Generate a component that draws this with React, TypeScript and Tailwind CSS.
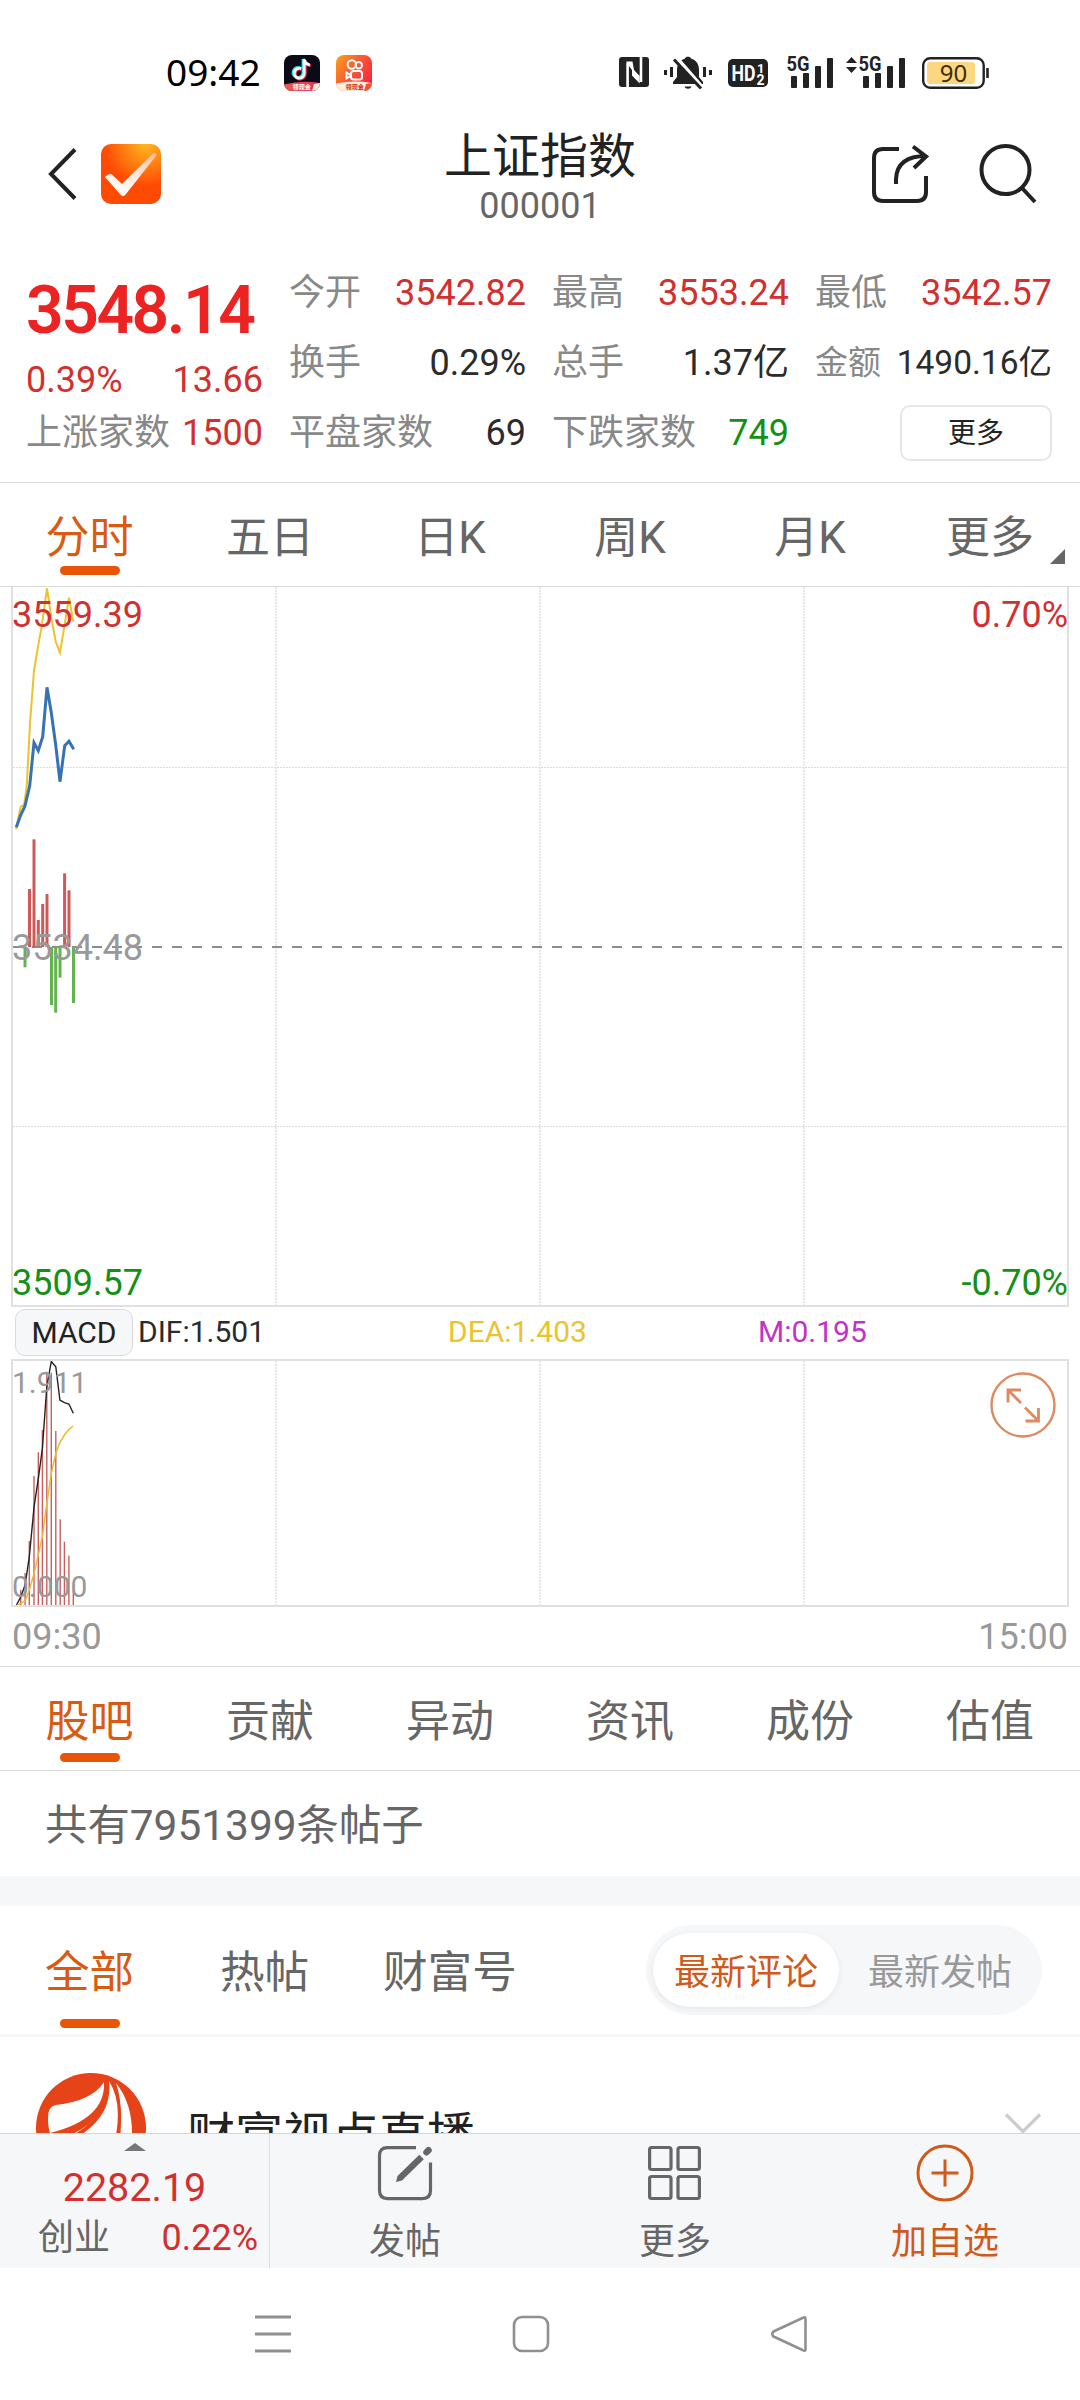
import React from "react";

const RED = "text-[#d2302f]";
const INK = "text-[#2b2b2b]";
const GREEN = "text-[#149014]";

function StatusBar() {
  return (
    <div className="flex h-[100px] items-center pt-[46px] pl-[166px] text-[#222]">
      <span className="-mt-[2px] w-[118px] font-['Noto_Sans'] text-[37px] leading-[54px] text-black">09:42</span>
      <svg width="36" height="36" viewBox="0 0 36 36">
        <defs>
          <clipPath id="appA"><rect width="36" height="36" rx="8" /></clipPath>
          <linearGradient id="ribbon" x1="0" x2="1"><stop offset="0" stopColor="#f05a50" /><stop offset="1" stopColor="#e8285a" /></linearGradient>
        </defs>
        <g clipPath="url(#appA)">
          <rect width="36" height="36" fill="#0b0b18" />
          <g fill="none" strokeWidth="3.2">
            <path d="M17.2 13.6a5 5 0 1 0 3 4.8V4.5c.6 3 2.6 5 5.6 5.4" stroke="#25e6e4" transform="translate(-1 -.6)" />
            <path d="M17.2 13.6a5 5 0 1 0 3 4.8V4.5c.6 3 2.6 5 5.6 5.4" stroke="#f8335a" transform="translate(.9 .7)" />
            <path d="M17.2 13.6a5 5 0 1 0 3 4.8V4.5c.6 3 2.6 5 5.6 5.4" stroke="#fff" strokeWidth="2.8" />
          </g>
          <path d="M0 29.5Q18 25 36 28v8H0z" fill="url(#ribbon)" />
          <path d="M28 36l2-7 6-1v6q-3 2-5 2z" fill="#fde6d8" />
          <text x="8.5" y="34.2" fontSize="6.2" fontWeight="700" fill="#fff" fontFamily="Noto Sans CJK SC">领现金</text>
        </g>
      </svg>
      <svg className="ml-4" width="36" height="36" viewBox="0 0 36 36">
        <defs>
          <clipPath id="appB"><rect width="36" height="36" rx="8" /></clipPath>
          <linearGradient id="kwai" x1="0" y1="0" x2="1" y2=".7"><stop offset="0" stopColor="#fca21c" /><stop offset=".5" stopColor="#fb5a32" /><stop offset="1" stopColor="#f9243f" /></linearGradient>
        </defs>
        <g clipPath="url(#appB)">
          <rect width="36" height="36" fill="url(#kwai)" />
          <g fill="none" stroke="#fff" strokeWidth="2">
            <circle cx="15.8" cy="9.5" r="4.2" /><circle cx="22.8" cy="10.3" r="3.2" />
            <rect x="15" y="16" width="11" height="8.5" rx="2.5" /><path d="M14.5 20l-4-2.500v6l4-2.500" />
          </g>
          <path d="M0 28.5Q18 25 36 28v8H0z" fill="#ffeedd" />
          <path d="M28 36l2-7 6-1v6q-3 2-5 2z" fill="#f4502f" />
          <text x="9.5" y="34.2" fontSize="6.2" fontWeight="700" fill="#d22a1c" fontFamily="Noto Sans CJK SC">领现金</text>
        </g>
      </svg>
      <svg className="-mt-[2px] ml-[247px]" width="30" height="30" viewBox="0 0 30 30">
        <rect width="30" height="30" rx="3" fill="#222" />
        <path d="M8.600 30V5.500M22 0V25" fill="none" stroke="#fff" strokeWidth="2.600" />
        <path d="M7.300 4.500H13.500L15 13L20.700 19V26.500L13 18.500V13L9.900 9z" fill="#fff" />
      </svg>
      <svg className="-mt-[2px] ml-[15px]" width="48" height="34" viewBox="0 0 48 34" fill="#222">
        <path d="M9 29v-2l4-5v-7C13 9 16.500 5 21 3.500 21.500 1 26.500 1 27 3.500 32 5 35 9 35 15v7l4 5v2zM20.500 31.500h7c-1 3-6 3-7 0z" />
        <path d="M12 2.500l26 30" stroke="#fff" strokeWidth="4.500" /><path d="M10 4.500l27 29" stroke="#222" strokeWidth="3" />
        <rect x="0" y="15" width="3" height="5" /><rect x="6" y="12" width="3" height="10" /><rect x="39" y="12" width="3" height="10" /><rect x="45" y="15" width="3" height="5" />
      </svg>
      <svg className="ml-4" width="40" height="28" viewBox="0 0 40 28">
        <rect width="40" height="28" rx="5" fill="#222" />
        <text x="3.5" y="22" fontSize="22" fontWeight="700" fill="#fff" fontFamily="Roboto" textLength="24" lengthAdjust="spacingAndGlyphs">HD</text>
        <text x="29" y="13.5" fontSize="13" fontWeight="700" fill="#fff" fontFamily="Roboto">1</text>
        <text x="28.5" y="25.5" fontSize="14" fontWeight="700" fill="#fff" fontFamily="Roboto">2</text>
      </svg>
      <Signal className="-mt-[3px] ml-[17px]" />
      <svg className="-mt-[16px] ml-[11px]" width="11" height="16" viewBox="0 0 11 16" fill="#222"><path d="M5.5 0L11 6H0zM0 10h11l-5.500 6z" /></svg>
      <Signal className="-mt-[3px]" />
      <svg className="-mt-px ml-[15px]" width="67" height="32" viewBox="0 0 67 32">
        <rect x="1.2" y="1.2" width="60.5" height="29.6" rx="7" fill="#fff" stroke="#222" strokeWidth="2.4" />
        <rect x="5" y="5" width="48" height="22" rx="3.5" fill="#fdd681" />
        <path d="M65.500 11v10" stroke="#222" strokeWidth="2.6" />
        <text x="31.5" y="24.5" fontSize="24" fill="#3a2c06" fontFamily="Noto Sans" textAnchor="middle">90</text>
      </svg>
    </div>
  );
}

function Signal({ className }: { className: string }) {
  return (
    <svg className={className} width="50" height="46" viewBox="-2 -6 50 46" fill="#222">
      <text x="-.5" y="16" fontSize="21" fontWeight="700" fontFamily="Roboto" textLength="23" lengthAdjust="spacingAndGlyphs">5G</text>
      <rect x="4" y="21" width="6" height="12" rx="1" /><rect x="16" y="18" width="6" height="15" rx="1" />
      <rect x="28" y="11" width="6" height="22" rx="1" /><rect x="40" y="3" width="6" height="30" rx="1" />
    </svg>
  );
}

function Header() {
  return (
    <div className="flex h-[148px] items-center justify-between pl-[48px] pr-[42px]">
      <div className="flex w-[200px] items-center">
        <svg width="30" height="52" viewBox="0 0 30 52" fill="none" stroke="#222" strokeWidth="4"><path d="M27 1.500L3 26l24 24.500" /></svg>
        <svg className="ml-[23px]" width="60" height="60" viewBox="0 0 60 60">
          <defs>
            <radialGradient id="logo" cx=".75" cy="0" r=".7"><stop offset="0" stopColor="#ffb920" /><stop offset="1" stopColor="#ff4a04" /></radialGradient>
            <linearGradient id="tick" x1="1" y1="0" x2=".3" y2="1"><stop offset="0" stopColor="#ffb890" /><stop offset=".5" stopColor="#ffe6da" /><stop offset="1" stopColor="#fff" /></linearGradient>
          </defs>
          <rect width="60" height="60" rx="10" fill="url(#logo)" />
          <path d="M4 33q5-5 8-1.500l9 8.500L52 9.500q4-1.500 3 2.500L25 50q-3 4-6 0z" fill="url(#tick)" />
        </svg>
      </div>
      <div className="flex flex-col items-center pt-[8px]">
        <span className="text-[48px] leading-[52px] text-[#222]">上证指数</span>
        <span className="mt-[4px] text-[36px] leading-[38px] text-[#666]">000001</span>
      </div>
      <div className="flex w-[206px] items-center justify-end">
        <svg className="-mt-[2px]" width="58" height="60" viewBox="0 0 58 60" fill="none" stroke="#222" strokeWidth="4">
          <path d="M28 6H12Q3 6 3 15v34q0 9 9 9h34q9 0 9-9V33" />
          <path d="M25 41V36Q26 13 55 13M42 3.500L55 13.500 43 25" />
        </svg>
        <svg className="-mt-px ml-[49px]" width="60" height="62" viewBox="0 0 60 62" fill="none" stroke="#222" strokeWidth="4"><circle cx="27.5" cy="27" r="24" /><path d="M44 45l13 14" /></svg>
      </div>
    </div>
  );
}

function Stat({ label, value, color, small }: { label: string; value: string; color: string; small?: boolean }) {
  return (
    <div className="flex h-[70px] w-[237px] items-center justify-between whitespace-nowrap">
      <span className={small ? "text-[33px] text-[#888]" : "text-[36px] text-[#888]"}>{label}</span>
      <span className={`${small ? "text-[33.5px]" : "text-[36px]"} ${color}`}>{value}</span>
    </div>
  );
}

function Quote() {
  return (
    <div className="flex h-[235px] gap-[26px] border-b border-[#d8d8d8] pt-[10px] pl-[26px] leading-[36px]">
      <div className="w-[237px]">
        <div className="flex h-[106px] items-center text-[66px] font-semibold tracking-[-2.5px] text-[#eb2423]">3548.14</div>
        <div className={`flex h-[34px] items-center justify-between pb-[3px] text-[36px] ${RED}`}><span>0.39%</span><span>13.66</span></div>
        <Stat label="上涨家数" value="1500" color={RED} />
      </div>
      <div>
        <Stat label="今开" value="3542.82" color={RED} />
        <Stat label="换手" value="0.29%" color={INK} />
        <Stat label="平盘家数" value="69" color={INK} />
      </div>
      <div>
        <Stat label="最高" value="3553.24" color={RED} />
        <Stat label="总手" value="1.37亿" color={INK} />
        <Stat label="下跌家数" value="749" color={GREEN} />
      </div>
      <div>
        <Stat label="最低" value="3542.57" color={RED} />
        <Stat label="金额" value="1490.16亿" color={INK} small />
        <div className="flex h-[70px] items-center justify-end pb-px">
          <button className="h-[56px] w-[152px] rounded-[10px] border-2 border-[#e6e6e6] text-[28px] leading-[53px] text-[#222]">更多</button>
        </div>
      </div>
    </div>
  );
}

function Tabs({ items, low }: { items: string[]; low?: boolean }) {
  return (
    <div className="grid h-[104px] grid-cols-6 border-b border-[#d8d8d8]">
      {items.map((t, i) => (
        <div key={t} className={`relative flex flex-col items-center pt-[33px] text-[44px] leading-[44px] ${i === 0 ? "pr-px text-[#d95a12]" : "text-[#666]"}`}>
          <span>{t}</span>
          {i === 0 && <span className={`${low ? "mt-[9px]" : "mt-[6px]"} h-[9px] w-[60px] rounded-full bg-[#e85506]`} />}
          {!low && i === 5 && (
            <svg className="absolute right-[15px] bottom-[22px]" width="15" height="15" viewBox="0 0 15 15"><path d="M15 0v15H0z" fill="#666" /></svg>
          )}
        </div>
      ))}
    </div>
  );
}

const average = "16,829.3 20.7,806.7 24,805 26.7,786.7 30,723.3 34,670.7 38,646.7 41.7,626.7 47,588.3 51.7,620 55.7,641.7 60,652.7 64.3,626.7 69,597.7 73.3,621.7";
const price = "16.3,827.3 20.7,815 25,806 29.7,785.7 34,742.7 38.3,750.7 42.7,736.7 47,687.3 51.3,712.7 55.7,745 60,781.7 64.7,745.7 69,741.3 73.7,749.3";
const volume = [[25, 967.3], [29.5, 889], [34, 839.3], [38.3, 920], [42.7, 904], [47, 894], [51.5, 1005], [55.7, 1012.7], [60, 977.7], [64.6, 873.3], [69, 890.3], [73.5, 1003]];
const dif = "16.5,1605 20.7,1597 25.1,1585 29.3,1556.7 34.1,1506.7 38.6,1476.7 42.4,1448.3 46.8,1386.7 51.3,1361.5 55.8,1366.7 59.9,1400 64.4,1402.7 68.9,1404 73.3,1413.3";
const dea = "16.5,1606 25.1,1600.7 29.3,1590 34.1,1573.3 38.6,1553.3 42.4,1536.7 46.8,1503.3 51.3,1473.3 55.8,1453.3 59.9,1442.7 64.4,1435 68.9,1429.3 73.3,1426";
const macd = [[20.7, 1590], [25.1, 1573], [29.3, 1541], [34, 1476], [38.3, 1452.3], [42.4, 1430], [46.8, 1371.7], [51.3, 1372.7], [55.8, 1431], [60.2, 1519.3], [64.4, 1541.7], [68.9, 1555.7], [73.3, 1590]];

function PriceChart() {
  return (
    <div className="relative mx-[11px] h-[720px] border-x-2 border-b-2 border-[#e0e0e0] text-[36px] leading-[38px]">
      <svg className="block" width="1054" height="718" viewBox="13 587 1054 718" fill="none">
        <path d="M276 587v718M540 587v718M804 587v718" stroke="#e8e8e8" strokeWidth="2" strokeDasharray="2 1" />
        <path d="M13 767.5h1054M13 1126.500h1054" stroke="#dcdcdc" strokeDasharray="2 1" />
        <path d="M12 947h1055" stroke="#8c8c8c" strokeWidth="2" strokeDasharray="10 10" />
        <polyline points={average} stroke="#ebc32c" strokeWidth="2" />
        <polyline points={price} stroke="#3672b4" strokeWidth="3" />
        {volume.map(([x, y]) => <path key={x} d={`M${x} 947V${y}`} stroke={y < 947 ? "#cf5859" : "#62b44e"} strokeWidth="3" />)}
      </svg>
      <span className="absolute -left-px top-[9px] text-[#d2302f]">3559.39</span>
      <span className="absolute -right-px top-[9px] text-[#d2302f]">0.70%</span>
      <span className="absolute -left-px top-[342px] text-[#999]">3534.48</span>
      <span className="absolute -left-px bottom-[3px] text-[#149014]">3509.57</span>
      <span className="absolute -right-px bottom-[3px] text-[#149014]">-0.70%</span>
    </div>
  );
}

function MacdChart() {
  return (
    <>
      <div className="grid h-[52px] grid-cols-[433px_310px_1fr] items-center pb-px pl-[15px] text-[30px] leading-[46px]">
        <div className="flex items-center">
          <span className="w-[118px] rounded-[10px] border border-[#d8dadd] bg-[#f6f7f9] text-center leading-[45px] text-[#222]">MACD</span>
          <span className="-mt-px ml-[5px] text-[#2b2b2b]">DIF:1.501</span>
        </div>
        <span className="-mt-px text-[#ebc32c]">DEA:1.403</span>
        <span className="-mt-px text-[#c132c8]">M:0.195</span>
      </div>
      <div className="relative mx-[11px] h-[248px] border-2 border-[#e0e0e0] text-[30px] leading-[32px] text-[#999]">
        <svg className="block" width="1054" height="244" viewBox="13 1361 1054 244" fill="none">
          <path d="M276 1361v244M540 1361v244M804 1361v244" stroke="#e8e8e8" strokeWidth="2" strokeDasharray="2 1" />
          {macd.map(([x, y]) => <path key={x} d={`M${x} 1606V${y}`} stroke="#c9605f" strokeWidth="1.4" />)}
          <polyline points={dif} stroke="#222" strokeWidth="1.4" />
          <polyline points={dea} stroke="#edb92e" strokeWidth="1.5" />
        </svg>
        <span className="absolute -left-px top-[6px]">1.911</span>
        <span className="absolute -left-px bottom-[2px]">0.000</span>
        <svg className="absolute right-[11px] top-[11px]" width="66" height="66" viewBox="0 0 66 66" fill="none" stroke="#dd8a60" strokeWidth="2.4">
          <circle cx="33" cy="33" r="31.5" />
          <path d="M31 31L18 18M18 30.500V18H31M35 35.500L48.500 49M48.500 36V49H35.500" strokeWidth="2.8" />
        </svg>
      </div>
      <div className="flex h-[60px] items-center justify-between border-b border-[#d8d8d8] px-[12px] pt-px text-[36px] leading-[36px] text-[#999]">
        <span>09:30</span><span>15:00</span>
      </div>
    </>
  );
}

function Posts() {
  return (
    <>
      <div className="h-[105px] pt-[33px] pl-[45px] text-[42.4px] leading-[44px] text-[#666]">共有7951399条帖子</div>
      <div className="h-[30px] bg-[#f6f7f9]" />
      <div className="flex h-[131px] justify-between border-b-[3px] border-[#f5f6f7] pr-[38px] pl-[45px]">
        <div className="flex gap-[44px] pt-[45px] text-[44.6px] leading-[44px] text-[#666]">
          <div className="flex w-[131px] flex-col text-[#d95a12]">
            <span>全部</span>
            <span className="mt-[24px] ml-[15px] h-[9px] w-[60px] rounded-full bg-[#e85506]" />
          </div>
          <span className="w-[119px]">热帖</span>
          <span>财富号</span>
        </div>
        <div className="mt-[19px] flex h-[90px] w-[396px] items-center rounded-full bg-[#f6f7f9] px-[7px] text-[36px]">
          <span className="h-[74px] w-[186px] rounded-full bg-white text-center leading-[80px] text-[#d0591c] shadow-[0_2px_6px_rgba(0,0,0,0.07)]">最新评论</span>
          <span className="h-[74px] w-[196px] pl-[6px] text-center leading-[80px] text-[#999]">最新发帖</span>
        </div>
      </div>
      <div className="flex h-[96px] items-start overflow-hidden pr-[38px] pl-[36px]">
        <svg className="mt-[36px] shrink-0" width="110" height="110" viewBox="0 0 110 110">
          <circle cx="55" cy="55" r="55" fill="#e64318" />
          <path d="M12 45Q12 33 20 32Q56 28 68 9Q70 46 14 60Q12 54 12 45z" fill="#fff" />
          <path d="M34 62Q72 46 73 8Q86 28 80 62Q76 90 60 105Q20 110 34 62z" fill="#fff" />
          <path d="M80 10Q96 30 96 60Q92 80 84 90Q84 70 85 50Q86 28 80 10z" fill="#fff" />
          <path d="M71 7Q76 46 30 68" fill="none" stroke="#e64318" strokeWidth="4" />
        </svg>
        <span className="mt-[73px] ml-[41px] flex-1 text-[48px] leading-[52px] text-[#222]">财富视点直播</span>
        <svg className="mt-[76px]" width="38" height="24" viewBox="0 0 38 24" fill="none" stroke="#ccc" strokeWidth="3.2"><path d="M2 1.500l17 17 17-17" /></svg>
      </div>
    </>
  );
}

function BottomBar() {
  return (
    <div className="grid h-[135px] grid-cols-4 border-t border-[#d4d6d8] bg-[#f6f7f9] text-[36px] leading-[36px] text-[#666]">
      <div className="flex flex-col items-center border-r border-[#dcdee0] pt-[9px]">
        <svg width="22" height="8" viewBox="0 0 22 8"><path d="M11 0l11 8H0z" fill="#777" /></svg>
        <span className="mt-[17px] text-[39.5px] leading-[40px] text-[#d2302f]">2282.19</span>
        <div className="mt-[12px] flex w-full justify-between pr-[11px] pl-[38px]"><span>创业</span><span className="text-[#d2302f]">0.22%</span></div>
      </div>
      <div className="flex flex-col items-center pt-[11px]">
        <svg width="56" height="56" viewBox="0 0 56 56" fill="none" stroke="#666" strokeWidth="3.2">
          <path d="M39 2.600H10.500q-8 0-8 8v35q0 8 8 8h35q8 0 8-8V17.500" />
          <path d="M42.300 9.700l4.500 4.600L25 35.500 19 37l1.500-6z" fill="#666" stroke="none" />
          <path d="M49.500 7.300l2-2" strokeWidth="6.500" strokeLinecap="round" />
        </svg>
        <span className="mt-[23px]">发帖</span>
      </div>
      <div className="flex flex-col items-center pt-[11px]">
        <svg width="56" height="56" viewBox="0 0 56 56" fill="none" stroke="#666" strokeWidth="3.2">
          <rect x="2.6" y="2.5" width="21.4" height="22" rx="2" /><rect x="31" y="2.5" width="21.4" height="22" rx="2" />
          <rect x="2.6" y="31.5" width="21.4" height="22" rx="2" /><rect x="31" y="31.5" width="21.4" height="22" rx="2" />
        </svg>
        <span className="mt-[23px]">更多</span>
      </div>
      <div className="flex flex-col items-center pt-[10px] text-[#d0591c]">
        <svg width="58" height="58" viewBox="0 0 58 58" fill="none" stroke="currentColor" strokeWidth="3"><circle cx="29" cy="29" r="27" /><path d="M29 15.500v27M15.500 29h27" /></svg>
        <span className="mt-[22px]">加自选</span>
      </div>
    </div>
  );
}

function SystemNav() {
  return (
    <div className="flex h-[132px] items-center justify-between pr-[272px] pl-[254px]">
      <svg width="38" height="38" viewBox="0 0 38 38" stroke="#909090" strokeWidth="3"><path d="M1 2h36M1 19h36M1 36h36" /></svg>
      <svg width="38" height="38" viewBox="0 0 38 38" fill="none" stroke="#909090" strokeWidth="2.6"><rect x="2" y="2" width="34" height="34" rx="8" /></svg>
      <svg width="38" height="38" viewBox="0 0 38 38" fill="none" stroke="#909090" strokeWidth="2.6" strokeLinejoin="round"><path d="M32.500 3Q35.500 1 35.500 4V34q0 3-3 1L3.500 21.500Q1 19 3.500 16.500z" /></svg>
    </div>
  );
}

export default function App() {
  return (
    <div className="h-[2400px] w-[1080px] overflow-hidden bg-white font-['Roboto','Noto_Sans_CJK_SC',sans-serif]">
      <StatusBar />
      <Header />
      <Quote />
      <Tabs items={["分时", "五日", "日K", "周K", "月K", "更多"]} />
      <PriceChart />
      <MacdChart />
      <Tabs low items={["股吧", "贡献", "异动", "资讯", "成份", "估值"]} />
      <Posts />
      <BottomBar />
      <SystemNav />
    </div>
  );
}
